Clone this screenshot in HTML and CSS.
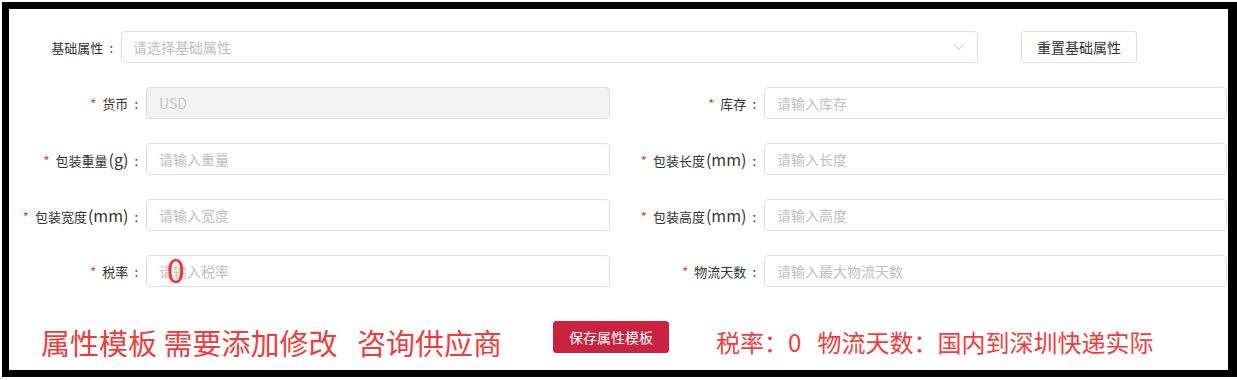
FILE: index.html
```html
<!DOCTYPE html>
<html lang="zh-CN">
<head>
  <meta charset="UTF-8" />
  <meta name="viewport" content="width=device-width, initial-scale=1.0" />
  <title>属性模板</title>
  <link rel="stylesheet" href="styles.css">
</head>
<body>
<div class="frame">
  <div class="content">

    <!-- 基础属性 -->
    <div class="base-row">
      <label class="base-label">基础属性<span class="colon">:</span></label>
      <div class="select">
        <span class="placeholder">请选择基础属性</span>
        <svg class="arrow" width="12" height="8" viewBox="0 0 12 8">
          <polyline points="1,1 6,6.5 11,1" fill="none" stroke="#c5c8ce" stroke-width="1"/>
        </svg>
      </div>
      <button class="btn btn-default">重置基础属性</button>
    </div>

    <!-- 属性表单 -->
    <div class="form-grid">
      <div class="form-item">
        <label class="item-label"><span class="req">*</span>货币<span class="colon">:</span></label>
        <div class="input disabled">USD</div>
      </div>
      <div class="form-item">
        <label class="item-label"><span class="req">*</span>库存<span class="colon">:</span></label>
        <div class="input"><span class="placeholder">请输入库存</span></div>
      </div>
      <div class="form-item">
        <label class="item-label"><span class="req">*</span>包装重量<span class="unit">(g)</span><span class="colon">:</span></label>
        <div class="input"><span class="placeholder">请输入重量</span></div>
      </div>
      <div class="form-item">
        <label class="item-label"><span class="req">*</span>包装长度<span class="unit">(mm)</span><span class="colon">:</span></label>
        <div class="input"><span class="placeholder">请输入长度</span></div>
      </div>
      <div class="form-item">
        <label class="item-label"><span class="req">*</span>包装宽度<span class="unit">(mm)</span><span class="colon">:</span></label>
        <div class="input"><span class="placeholder">请输入宽度</span></div>
      </div>
      <div class="form-item">
        <label class="item-label"><span class="req">*</span>包装高度<span class="unit">(mm)</span><span class="colon">:</span></label>
        <div class="input"><span class="placeholder">请输入高度</span></div>
      </div>
      <div class="form-item">
        <label class="item-label"><span class="req">*</span>税率<span class="colon">:</span></label>
        <div class="input note-host">
          <span class="placeholder">请输入税率</span>
          <span class="note-zero">0</span>
        </div>
      </div>
      <div class="form-item">
        <label class="item-label"><span class="req">*</span>物流天数<span class="colon">:</span></label>
        <div class="input"><span class="placeholder">请输入最大物流天数</span></div>
      </div>
    </div>

    <!-- 底部 -->
    <div class="footer-row">
      <span class="note-big">属性模板 需要添加修改&nbsp;&nbsp; 咨询供应商</span>
      <button class="btn btn-save">保存属性模板</button>
      <span class="note-small">税率：0&nbsp;&nbsp;&nbsp;物流天数：国内到深圳快递实际</span>
    </div>

  </div>
</div>
</body>
</html>
```

FILE: styles.css
```css
/* 页面 */
body {
  margin: 0;
  background: #fff;
  font-family: "Noto Sans CJK SC", "Noto Sans", sans-serif;
  color: #333;
}

/* 黑色外框 */
.frame {
  margin: 2px 0 0 2px;
  border: 7px solid #000;
  border-right-width: 9px;
  width: 1219px;
  height: 361px;
  overflow: hidden;
}

.content {
  padding-top: 22px;
  background: #fff;
}

/* 基础属性行 */
.base-row {
  display: flex;
  align-items: center;
  height: 32px;
  margin-bottom: 24px;
}

.base-label {
  width: 112px;
  box-sizing: border-box;
  padding-right: 8px;
  text-align: right;
  font-size: 13px;
}

.colon {
  margin-left: 6px;
}

.unit {
  font-size: 16px;
  margin-left: 1px;
}

.select {
  width: 857px;
  height: 32px;
  box-sizing: border-box;
  border: 1px solid #dcdee2;
  border-radius: 4px;
  padding: 0 12px 0 11px;
  display: flex;
  align-items: center;
  justify-content: space-between;
  font-size: 14px;
}

.placeholder {
  color: #c0c0c0;
}

/* 按钮 */
.btn {
  width: 116px;
  height: 32px;
  border-radius: 3px;
  font-family: inherit;
  font-size: 14px;
  padding: 0;
  cursor: pointer;
}

.btn-default {
  margin-left: 43px;
  background: #fff;
  border: 1px solid #dcdee2;
  color: #333;
}

.btn-save {
  margin-left: 51px;
  background: #cb2240;
  border: 1px solid #cb2240;
  color: #fff;
}

/* 表单网格 */
.form-grid {
  display: grid;
  grid-template-columns: 601px 601px;
  column-gap: 17px;
  row-gap: 24px;
}

.form-item {
  display: flex;
  align-items: center;
  height: 32px;
}

.item-label {
  width: 137px;
  flex: none;
  box-sizing: border-box;
  padding-right: 8px;
  text-align: right;
  font-size: 13px;
  white-space: nowrap;
}

.req {
  color: #ed4014;
  font-size: 13px;
  margin-right: 6px;
}

.input {
  width: 464px;
  height: 32px;
  box-sizing: border-box;
  border: 1px solid #dcdee2;
  border-radius: 4px;
  padding: 0 12px;
  display: flex;
  align-items: center;
  font-size: 14px;
}

.form-item:nth-child(2n) .input {
  width: 463px;
}

.input.disabled {
  background: #f3f3f3;
  color: #c5c5c5;
}

/* 批注 */
.note-host {
  position: relative;
}

.note-zero {
  position: absolute;
  left: 20px;
  top: -7px;
  font-size: 32px;
  line-height: 40px;
  color: #ff2b2b;
}

.footer-row {
  display: flex;
  align-items: center;
  height: 32px;
  margin-top: 34px;
  padding-left: 32px;
}

.note-big {
  padding-top: 9px;
  font-size: 29px;
  line-height: 32px;
  color: #f23c3c;
  white-space: nowrap;
}

.note-small {
  padding-top: 9px;
  margin-left: 47px;
  font-size: 24px;
  line-height: 32px;
  color: #f23c3c;
  white-space: nowrap;
}
```
